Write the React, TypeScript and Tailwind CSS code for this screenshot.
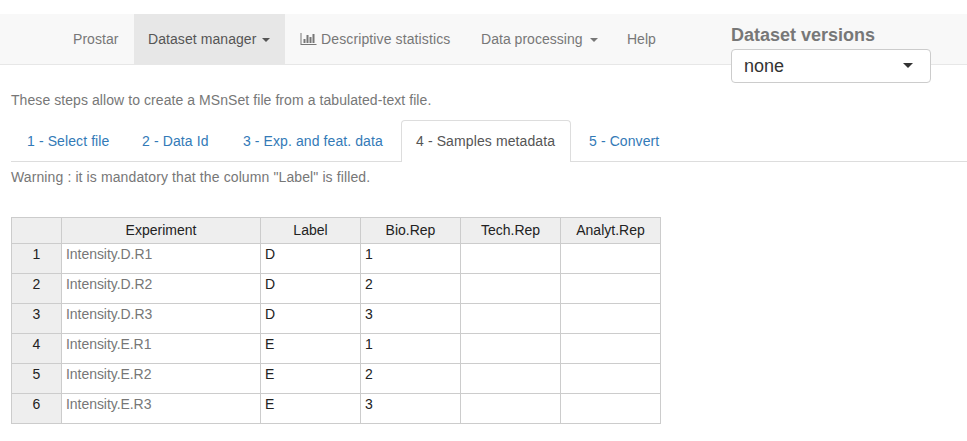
import React from "react";

const columns = ["Experiment", "Label", "Bio.Rep", "Tech.Rep", "Analyt.Rep"];

const rows = [
  ["Intensity.D.R1", "D", "1", "", ""],
  ["Intensity.D.R2", "D", "2", "", ""],
  ["Intensity.D.R3", "D", "3", "", ""],
  ["Intensity.E.R1", "E", "1", "", ""],
  ["Intensity.E.R2", "E", "2", "", ""],
  ["Intensity.E.R3", "E", "3", "", ""],
];

function Caret({ className = "" }: { className?: string }) {
  return (
    <span
      className={`inline-block h-0 w-0 border-x-4 border-t-4 border-x-transparent border-t-current ${className}`}
    />
  );
}

function ChartIcon() {
  return (
    <svg className="mr-1 h-[14px] w-[17px] shrink-0" viewBox="-64 0 2176 1792" fill="currentColor">
      <path d="M640 896v512h-256v-512h256zM1024 384v1024h-256v-1024h256zM2048 1536v128h-2048v-1536h128v1408h1920zM1408 640v768h-256v-768h256zM1792 256v1152h-256v-1152h256z" />
    </svg>
  );
}

function Navbar() {
  return (
    <nav className="mt-[14px] flex h-[51px] items-start border-b border-[#e7e7e7] bg-[#f8f8f8] text-[#777]">
      <a className="flex h-[50px] w-[134px] items-center pl-[73px]">
        <span className="tracking-[0.05px]">Prostar</span>
      </a>
      <a className="flex h-[51px] w-[151px] items-center bg-[#e7e7e7] pb-px pl-[14px] text-[#555]">
        <span className="tracking-[0.07px]">Dataset manager</span>
        <Caret className="ml-[6px] mt-[2px]" />
      </a>
      <a className="flex h-[50px] w-[181px] items-center pl-[15px]">
        <ChartIcon />
        <span className="tracking-[0.12px]">Descriptive statistics</span>
      </a>
      <a className="flex h-[50px] w-[146px] items-center pl-[15px]">
        <span className="tracking-[0.03px]">Data processing</span>
        <Caret className="ml-[7px] mt-[2px]" />
      </a>
      <a className="flex h-[50px] w-[119px] items-center pl-[15px]">
        <span>Help</span>
      </a>
      <div className="w-[200px] pt-[8px]">
        <div className="h-[27px] text-[18px] font-bold leading-[26px]">Dataset versions</div>
        <div className="flex h-[34px] items-center justify-between rounded border border-[#ccc] bg-white pl-3 pr-[17px] text-[18px] text-[#333]">
          <span>none</span>
          <span className="mb-[2px] h-0 w-0 border-x-5 border-t-5 border-x-transparent border-t-[#333]" />
        </div>
      </div>
    </nav>
  );
}

function Tabs() {
  const link = "flex h-[42px] items-center text-[#337ab7]";
  return (
    <div className="mt-[10px] flex h-[42px] border-b border-[#ddd]">
      <a className={`${link} w-[115px] pl-4`}><span className="tracking-[0.1px]">1 - Select file</span></a>
      <a className={`${link} w-[101px] pl-4`}><span className="tracking-[0.12px]">2 - Data Id</span></a>
      <a className={`${link} w-[174px] pl-4`}><span className="tracking-[0.09px]">3 - Exp. and feat. data</span></a>
      <a className="flex h-[42px] w-[170px] items-center rounded-t border border-b-0 border-[#ddd] bg-white pb-px pl-[14px] text-[#555]">
        <span className="tracking-[0.11px]">4 - Samples metadata</span>
      </a>
      <a className={`${link} pl-[18px]`}><span className="tracking-[0.1px]">5 - Convert</span></a>
    </div>
  );
}

function MetadataTable() {
  return (
    <div className="mt-[30px] w-[650px] border-l border-t border-[#ccc] text-[#222]">
      <div className="grid h-[26px] grid-cols-[50px_199px_100px_100px_100px_100px]">
        <div className="border-b border-r border-[#ccc] bg-[#eee]" />
        {columns.map((name) => (
          <div key={name} className="border-b border-r border-[#ccc] bg-[#eee] text-center leading-[25px]">
            <span>{name}</span>
          </div>
        ))}
      </div>
      {rows.map((cells, index) => (
        <div key={index} className="grid h-[30px] grid-cols-[50px_199px_100px_100px_100px_100px]">
          <div className="border-b border-r border-[#ccc] bg-[#eee] text-center leading-[21px]">{index + 1}</div>
          {cells.map((value, column) => (
            <div
              key={column}
              className={`border-b border-r border-[#ccc] bg-white px-1 leading-[21px] ${column === 0 ? "tracking-[-0.05px] text-[#777]" : ""}`}
            >
              {value}
            </div>
          ))}
        </div>
      ))}
    </div>
  );
}

export default function App() {
  return (
    <div className="flex h-[441px] w-[967px] flex-col overflow-hidden bg-white font-['Liberation_Sans',Arial,sans-serif] text-[14px] leading-5 text-[#333]">
      <Navbar />
      <main className="pl-[11px]">
        <p className="mt-[25px] tracking-[0.07px] text-[#777]">These steps allow to create a MSnSet file from a tabulated-text file.</p>
        <Tabs />
        <p className="mt-[5px] tracking-[0.11px] text-[#777]">Warning : it is mandatory that the column "Label" is filled.</p>
        <MetadataTable />
      </main>
    </div>
  );
}
